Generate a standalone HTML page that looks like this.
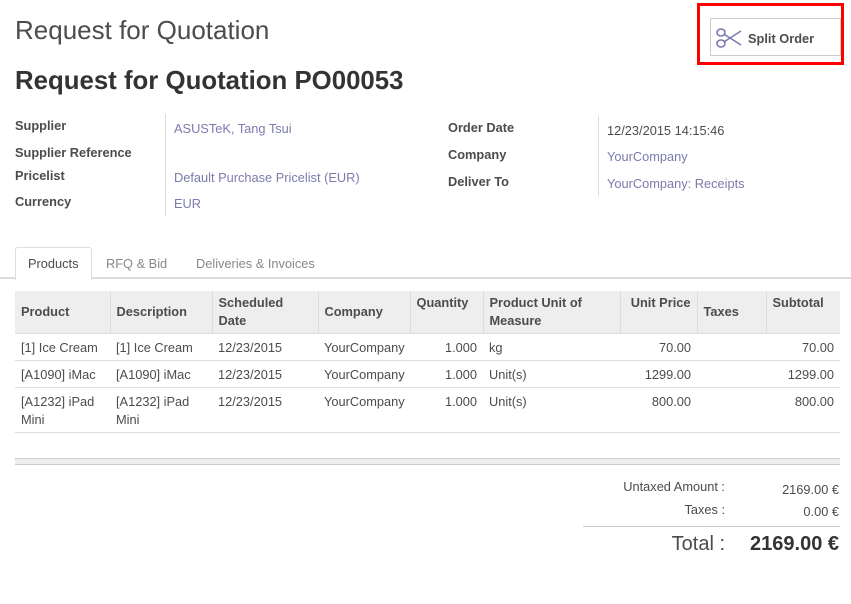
<!DOCTYPE html>
<html><head><style>
body{margin:0;width:851px;height:604px;background:#fff;font-family:"Liberation Sans",sans-serif;color:#4c4c4c;position:relative;overflow:hidden;font-size:12.8px}
.a{position:absolute;white-space:nowrap}
.b{font-weight:bold}
.l{color:#7c7bad}
table{position:absolute;left:15px;top:291px;width:825px;border-collapse:collapse;font-size:12.8px;table-layout:fixed}
th{background:#eee;text-align:left;font-weight:bold;padding:2px 6px;border-left:1px solid #ddd;height:38px;vertical-align:middle;line-height:18px;box-sizing:border-box}
th:first-child{border-left:none}
td{padding:5px 6px 3px;border-top:1px solid #ddd;vertical-align:top;line-height:18px}
.r{text-align:right}
</style></head><body>
<div class="a" style="left:15px;top:15px;font-size:26px;color:#4c4c4c">Request for Quotation</div>
<div style="position:absolute;left:697px;top:3px;width:147px;height:62px;border:3px solid #f00;box-sizing:border-box"></div>
<div style="position:absolute;left:710px;top:18px;width:131px;height:38px;border:1px solid #ccc;box-sizing:border-box"></div>
<svg class="a" style="left:715px;top:27px" width="28" height="22" viewBox="0 0 28 22"><g fill="none" stroke="#7c7bad" stroke-width="1.6"><ellipse cx="6" cy="5.5" rx="4" ry="3.5"/><ellipse cx="6" cy="16.5" rx="4" ry="3.5"/><path d="M9.5 7.5 L26 18 M9.5 14.5 L26 4"/></g></svg>
<div class="a b" style="left:748px;top:31px;font-size:12.8px">Split Order</div>
<div class="a b" style="left:15px;top:67px;font-size:25.8px;color:#333">Request for Quotation PO00053</div>

<div class="a b" style="left:15px;top:118px">Supplier</div>
<div class="a b" style="left:15px;top:145px">Supplier Reference</div>
<div class="a b" style="left:15px;top:168px">Pricelist</div>
<div class="a b" style="left:15px;top:194px">Currency</div>
<div style="position:absolute;left:165px;top:114px;width:1px;height:102px;background:#ddd"></div>
<div class="a l" style="left:174px;top:121px">ASUSTeK, Tang Tsui</div>
<div class="a l" style="left:174px;top:170px">Default Purchase Pricelist (EUR)</div>
<div class="a l" style="left:174px;top:196px">EUR</div>

<div class="a b" style="left:448px;top:120px">Order Date</div>
<div class="a b" style="left:448px;top:147px">Company</div>
<div class="a b" style="left:448px;top:174px">Deliver To</div>
<div style="position:absolute;left:598px;top:116px;width:1px;height:80px;background:#ddd"></div>
<div class="a" style="left:607px;top:123px">12/23/2015 14:15:46</div>
<div class="a l" style="left:607px;top:149px">YourCompany</div>
<div class="a l" style="left:607px;top:176px">YourCompany: Receipts</div>

<div style="position:absolute;left:0;top:277px;width:851px;height:2px;background:#ddd"></div>
<div style="position:absolute;left:15px;top:247px;width:75px;height:32px;border:1px solid #ddd;border-bottom:none;border-radius:3px 3px 0 0;background:#fff"></div>
<div class="a" style="left:28px;top:256px">Products</div>
<div class="a" style="left:106px;top:256px;color:#888">RFQ &amp; Bid</div>
<div class="a" style="left:196px;top:256px;color:#888">Deliveries &amp; Invoices</div>

<table>
<colgroup><col style="width:95px"><col style="width:102px"><col style="width:106px"><col style="width:92px"><col style="width:73px"><col style="width:137px"><col style="width:77px"><col style="width:69px"><col style="width:74px"></colgroup>
<tr style="height:42px"><th>Product</th><th>Description</th><th>Scheduled<br>Date</th><th>Company</th><th style="vertical-align:top;padding-top:3px">Quantity</th><th style="vertical-align:top;padding-top:3px">Product Unit of<br>Measure</th><th style="vertical-align:top;padding-top:3px" class="r">Unit Price</th><th>Taxes</th><th style="vertical-align:top;padding-top:3px">Subtotal</th></tr>
<tr><td>[1] Ice Cream</td><td>[1] Ice Cream</td><td>12/23/2015</td><td>YourCompany</td><td class="r">1.000</td><td>kg</td><td class="r">70.00</td><td></td><td class="r">70.00</td></tr>
<tr><td>[A1090] iMac</td><td>[A1090] iMac</td><td>12/23/2015</td><td>YourCompany</td><td class="r">1.000</td><td>Unit(s)</td><td class="r">1299.00</td><td></td><td class="r">1299.00</td></tr>
<tr><td>[A1232] iPad<br>Mini</td><td>[A1232] iPad<br>Mini</td><td>12/23/2015</td><td>YourCompany</td><td class="r">1.000</td><td>Unit(s)</td><td class="r">800.00</td><td></td><td class="r">800.00</td></tr>
<tr><td colspan="9" style="padding:0;height:0"></td></tr>
</table>
<div style="position:absolute;left:15px;top:458px;width:825px;height:7px;background:#eee;border-top:1px solid #ccc;border-bottom:1px solid #ccc;box-sizing:border-box"></div>

<div class="a" style="right:126px;top:479px">Untaxed Amount :</div>
<div class="a" style="right:12px;top:482px">2169.00 €</div>
<div class="a" style="right:126px;top:502px">Taxes :</div>
<div class="a" style="right:12px;top:504px">0.00 €</div>
<div style="position:absolute;left:583px;top:526px;width:257px;height:1px;background:#ccc"></div>
<div class="a" style="right:126px;top:533px;font-size:20px">Total :</div>
<div class="a b" style="right:12px;top:533px;font-size:20px;color:#333">2169.00 €</div>
</body></html>
